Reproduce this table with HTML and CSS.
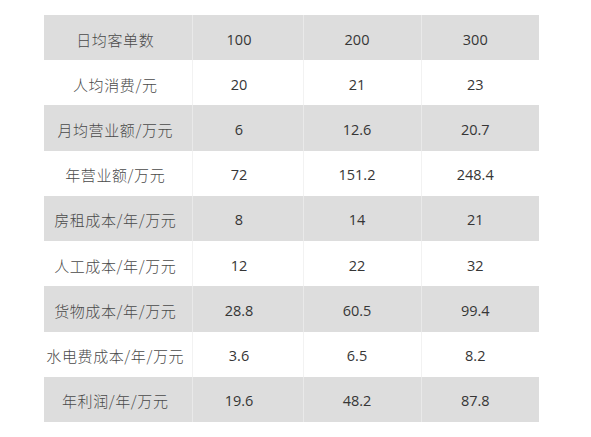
FILE: index.html
```html
<!DOCTYPE html>
<html lang="zh">
<head>
<meta charset="utf-8">
<link rel="stylesheet" href="styles.css">
</head>
<body>
<table class="data">
  <colgroup>
    <col class="c1"><col class="c2"><col class="c3"><col class="c4">
  </colgroup>
  <tbody>
    <tr class="shade"><td>日均客单数</td><td>100</td><td>200</td><td>300</td></tr>
    <tr><td>人均消费/元</td><td>20</td><td>21</td><td>23</td></tr>
    <tr class="shade"><td>月均营业额/万元</td><td>6</td><td>12.6</td><td>20.7</td></tr>
    <tr><td>年营业额/万元</td><td>72</td><td>151.2</td><td>248.4</td></tr>
    <tr class="shade"><td>房租成本/年/万元</td><td>8</td><td>14</td><td>21</td></tr>
    <tr><td>人工成本/年/万元</td><td>12</td><td>22</td><td>32</td></tr>
    <tr class="shade"><td>货物成本/年/万元</td><td>28.8</td><td>60.5</td><td>99.4</td></tr>
    <tr><td>水电费成本/年/万元</td><td>3.6</td><td>6.5</td><td>8.2</td></tr>
    <tr class="shade"><td>年利润/年/万元</td><td>19.6</td><td>48.2</td><td>87.8</td></tr>
  </tbody>
</table>
</body>
</html>
```

FILE: styles.css
```css
html, body {
  margin: 0;
  padding: 0;
  background: #ffffff;
}
body {
  padding: 15px 0 0 44px;
  font-family: "Open Sans", "Noto Sans CJK SC", sans-serif;
  color: #363636;
}
.data {
  border-collapse: collapse;
  table-layout: fixed;
  width: 495px;
}
.c1 { width: 148px; }
.c2 { width: 111px; }
.c3 { width: 118px; }
.c4 { width: 118px; }
.data tr {
  height: 45.22px;
}
.data td {
  padding: 3px 10px 0 0;
  text-align: center;
  font-size: 14.5px;
  white-space: nowrap;
  border-left: 1px solid #f2f2f2;
}
.data td:nth-child(2) {
  padding-right: 17px;
}
.data td:first-child {
  border-left: none;
  padding-right: 5px;
  font-family: "Noto Sans CJK SC", sans-serif;
  font-weight: 300;
  font-size: 15px;
  color: #4a4a4a;
  letter-spacing: 0.6px;
}
.data tr.shade td {
  background: #dddddd;
  border-left-color: #e9e9e9;
}
.data tr.shade td:first-child {
  border-left: none;
}
```
